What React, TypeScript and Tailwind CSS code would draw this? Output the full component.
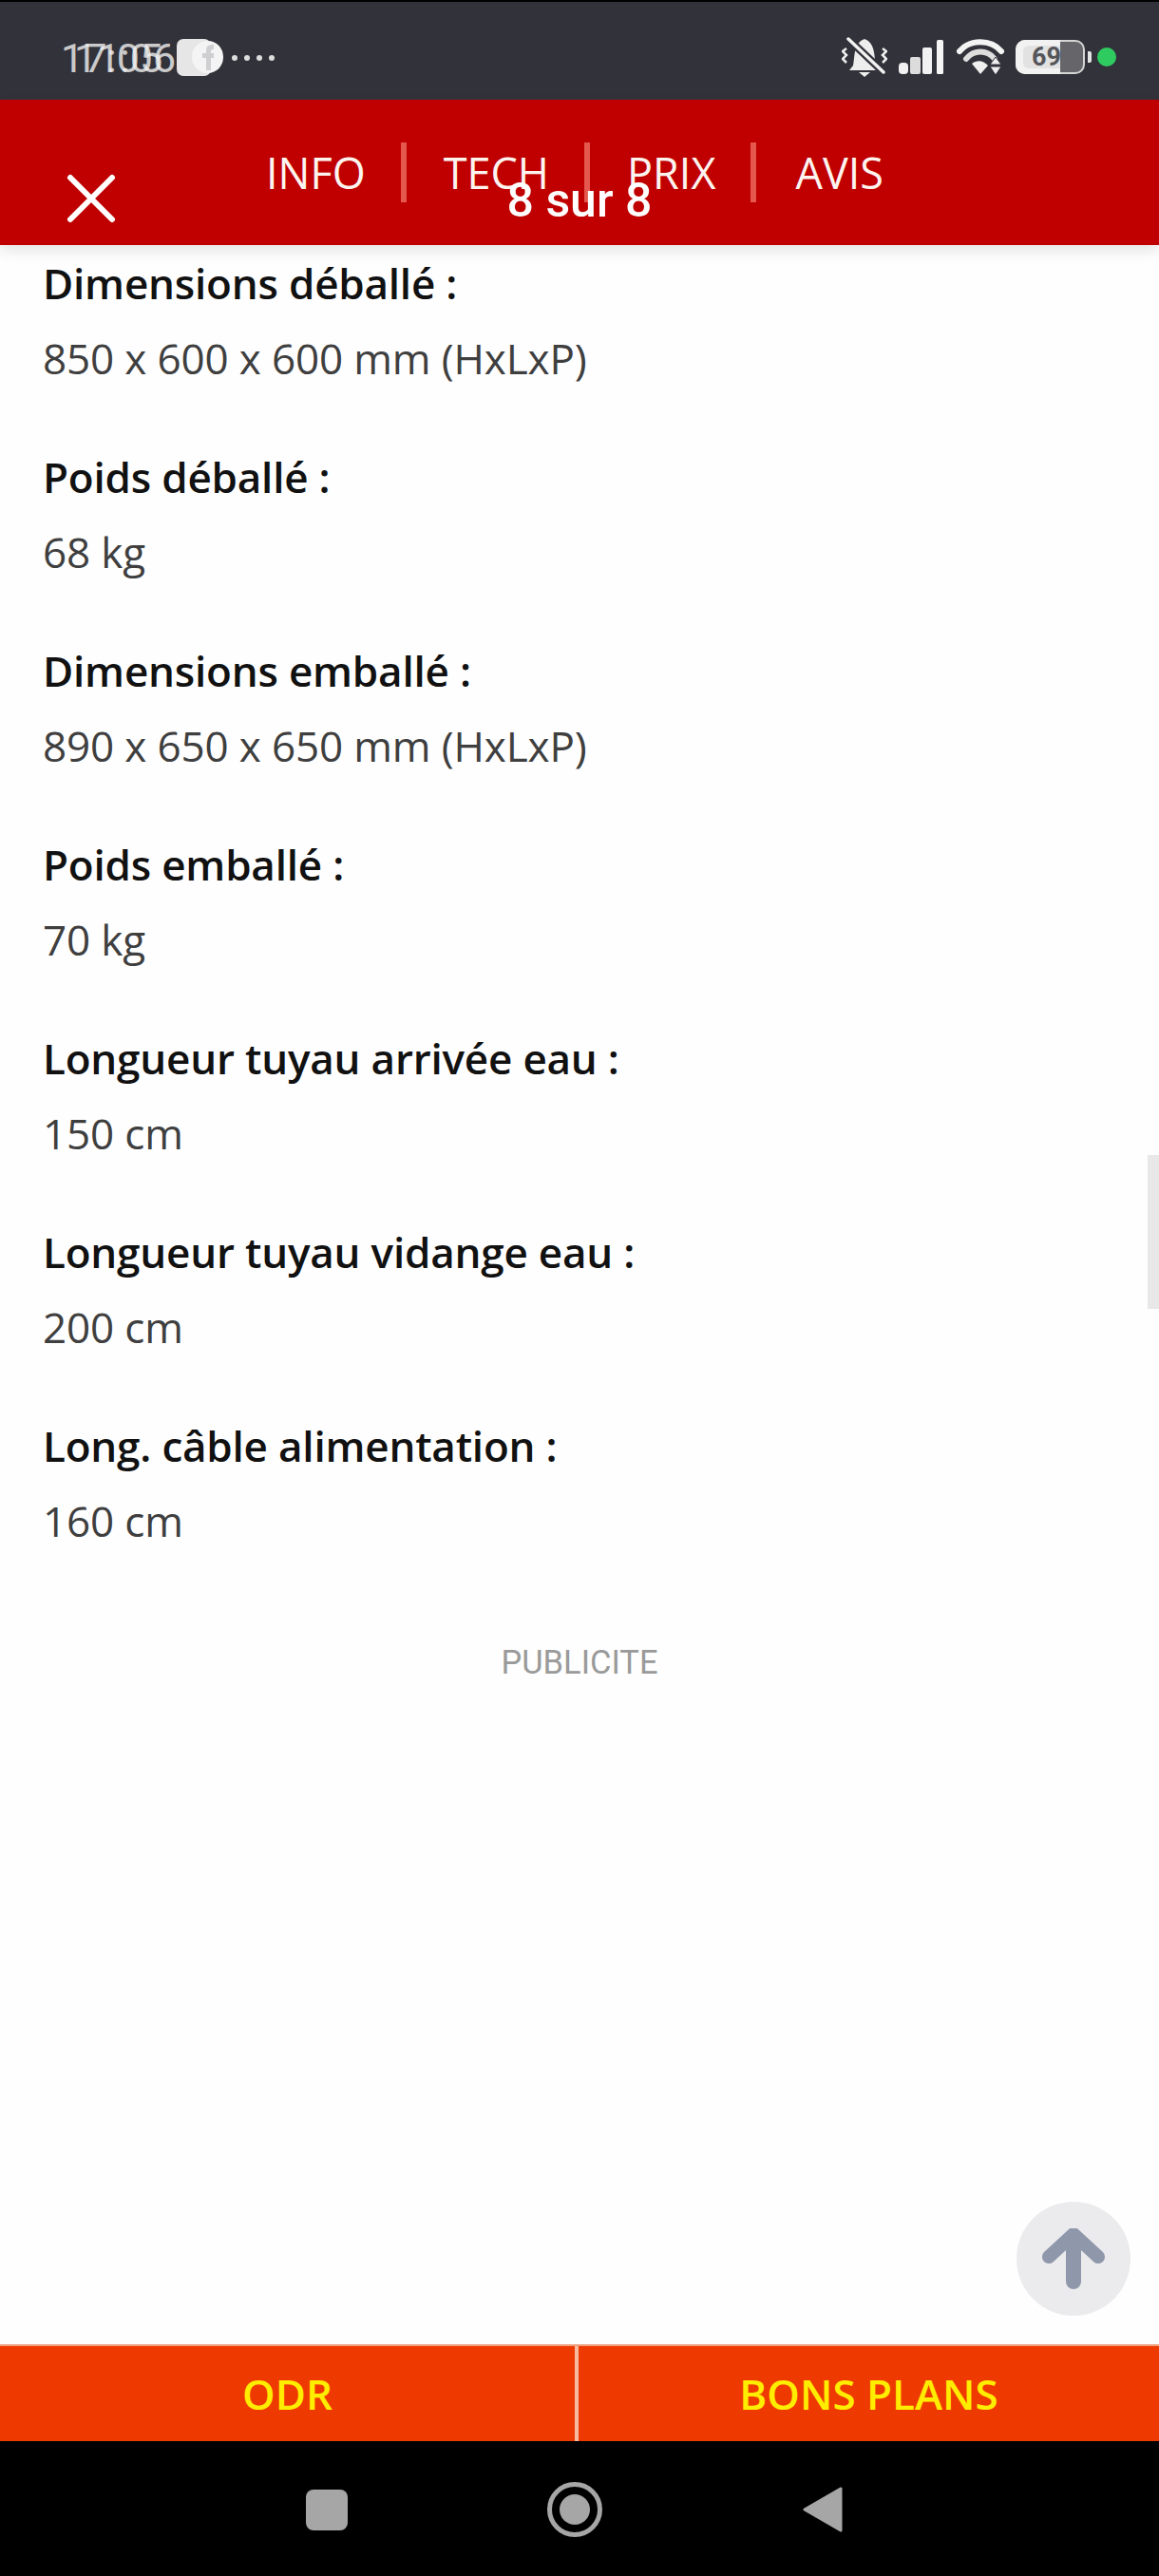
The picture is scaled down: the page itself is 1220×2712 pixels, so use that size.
import React from "react";

const rows = [
  ["Dimensions déballé :", "850 x 600 x 600 mm (HxLxP)"],
  ["Poids déballé :", "68 kg"],
  ["Dimensions emballé :", "890 x 650 x 650 mm (HxLxP)"],
  ["Poids emballé :", "70 kg"],
  ["Longueur tuyau arrivée eau :", "150 cm"],
  ["Longueur tuyau vidange eau :", "200 cm"],
  ["Long. câble alimentation :", "160 cm"],
];

function StatusIcons() {
  return (
    <div className="flex items-center">
      <svg width="48" height="42" viewBox="0 0 48 42" className="mr-[12px]">
        <path d="M12 30 C14 22 12 6 24 2 C36 6 34 22 36 30 L40 35 H8 Z" fill="#eeeeee" />
        <path d="M18 37 H30 L24 42 Z" fill="#eeeeee" />
        <path d="M7 2 L44 37" stroke="#32323a" strokeWidth="8" />
        <path d="M7 2 L44 37" stroke="#f2f2f2" strokeWidth="3.5" strokeLinecap="round" />
        <path d="M5 12 L1 15 L5 19 L1 23 L5 27 M43 12 L47 15 L43 19 L47 23 L43 27" stroke="#eeeeee" strokeWidth="2.5" fill="none" />
      </svg>
      <svg width="47" height="36" viewBox="0 0 47 36" className="mr-[14px]">
        <rect x="0" y="24" width="10" height="12" rx="4" fill="#f2f2f2" />
        <rect x="12" y="18" width="11" height="18" rx="2" fill="#dcdcdc" />
        <rect x="25" y="8" width="10" height="28" rx="2" fill="#f2f2f2" />
        <rect x="40" y="0" width="7" height="36" rx="1.5" fill="#f5f5f5" />
      </svg>
      <svg width="50" height="38" viewBox="0 0 50 38" className="mr-[12px]">
        <path d="M3 13 C14 0 36 0 47 13" stroke="#f4f4f4" strokeWidth="6" fill="none" strokeLinecap="round" />
        <path d="M10 21 C18 11 32 11 40 21" stroke="#dedede" strokeWidth="6" fill="none" strokeLinecap="round" />
        <path d="M16 26 L25 37 L33 28 C28 22 21 22 16 26 Z" fill="#f0f0f0" />
        <path d="M41 19 L35 27 H47 Z M35 29 H47 L41 38 Z" fill="#eeeeee" stroke="#32323a" strokeWidth="1" />
      </svg>
      <div className="relative mr-[3px] h-[36px] w-[73px] rounded-[10px] border-2 border-[#d4d4d4] bg-[#66666a]">
        <div className="absolute -left-[2px] -top-[2px] h-[36px] w-[47px] rounded-l-[10px] bg-[#f2f2f2]" />
        <div className="absolute left-[6px] top-[4px] h-[24px] w-[39px] rounded-l-[6px] bg-[#e2e2e2]" />
        <span className="absolute left-[15px] top-[2px] font-['Roboto',sans-serif] text-[27px] font-bold leading-[28px] text-[#55555a]">
          69
        </span>
      </div>
      <div className="mr-[6px] h-[12px] w-[4px] rounded-r-[2px] bg-[#e4e4e4]" />
      <div className="mr-[45px] h-[20px] w-[20px] rounded-full bg-[#2ecc60]" />
    </div>
  );
}

export default function App() {
  return (
    <div className="relative flex h-[2712px] w-[1220px] flex-col overflow-hidden bg-[#fefefe] font-['Open_Sans',sans-serif]">
      <header className="flex h-[105px] shrink-0 items-center justify-between border-t-2 border-black bg-[#32323a]">
        <div className="flex items-center pl-[64px] pt-[14px]">
          <div className="relative h-[44px] w-[116px] font-['Roboto',sans-serif] text-[43px] leading-[44px] text-[#f0f0f0]">
            <span className="absolute left-0 top-0 opacity-80">17:05</span>
            <span className="absolute left-[14px] top-0 opacity-80">11:06</span>
          </div>
          <div className="relative ml-[6px] h-[39px] w-[36px] rounded-[7px] bg-[#e6e6e6]">
            <div className="absolute left-[16px] top-[2px] flex h-[34px] w-[33px] items-center justify-center rounded-full bg-[#f4f4f4]">
              <svg width="14" height="28" viewBox="0 0 14 28">
                <path d="M5 28 V15 H1 V10 H5 V7 C5 3 7 1 13 1 V6 C10 6 10 7 10 10 H13 V15 H10 V28 Z" fill="#cfcfd2" />
              </svg>
            </div>
          </div>
          <div className="ml-[22px] flex items-center gap-[7px]">
            <div className="h-[6px] w-[6px] rounded-full bg-[#dddddd]" />
            <div className="h-[6px] w-[6px] rounded-full bg-[#dddddd]" />
            <div className="h-[6px] w-[6px] rounded-full bg-[#dddddd]" />
            <div className="h-[6px] w-[6px] rounded-full bg-[#dddddd]" />
          </div>
        </div>
        <div className="pt-[12px]">
          <StatusIcons />
        </div>
      </header>

      <nav className="relative z-10 flex h-[153px] shrink-0 items-center bg-[#c00000] pl-[280px] text-[45px] font-medium text-[#fdf4f0] shadow-[0_6px_14px_rgba(0,0,0,0.1)]">
        <span>INFO</span>
        <div className="ml-[37px] mr-[39px] h-[63px] w-[6px] bg-[#e4584e]" />
        <span>TECH</span>
        <div className="ml-[37px] mr-[39px] h-[63px] w-[6px] bg-[#e4584e]" />
        <span>PRIX</span>
        <div className="ml-[37px] mr-[41px] h-[63px] w-[6px] bg-[#e4584e]" />
        <span>AVIS</span>
        <svg width="52" height="52" viewBox="0 0 52 52" className="absolute left-[70px] top-[78px]">
          <path d="M4 4 L48 48 M48 4 L4 48" stroke="#ffffff" strokeWidth="6" strokeLinecap="round" />
        </svg>
        <div className="absolute left-0 right-0 top-[77px] text-center font-['Roboto',sans-serif] text-[50px] font-medium leading-[58px] text-white">
          8 sur 8
        </div>
      </nav>

      <main className="relative flex-1 px-[45px] pt-[1px]">
        {rows.map(([title, value]) => (
          <div key={title} className="mb-[46px]">
            <div className="text-[44px] font-semibold leading-[79px] tracking-[-0.2px] text-[#111111]">{title}</div>
            <div className="text-[44px] leading-[79px] tracking-[-0.15px] text-[#3f3f3f]">{value}</div>
          </div>
        ))}
        <div className="mt-[87px] text-center font-['Roboto',sans-serif] text-[34.5px] font-normal leading-[44px] text-[#9a9a9a]">
          PUBLICITE
        </div>
        <div className="absolute right-0 top-[958px] h-[162px] w-[12px] bg-[#e8e8e8]" />
        <div className="absolute left-[1070px] top-[2060px] flex h-[120px] w-[120px] items-center justify-center rounded-full bg-[#ebebed]">
          <svg width="66" height="64" viewBox="0 0 66 64">
            <path d="M33 8 V56" stroke="#8f97ab" strokeWidth="16" strokeLinecap="round" />
            <path d="M7 30 L33 6 L59 30" stroke="#8f97ab" strokeWidth="14" fill="none" strokeLinecap="round" strokeLinejoin="miter" />
          </svg>
        </div>
      </main>

      <footer className="flex h-[102px] shrink-0 border-t-2 border-[#f0a080] bg-[#ee3a00] text-[44px] font-semibold text-[#ffed00]">
        <div className="flex w-[605px] items-center justify-center">ODR</div>
        <div className="w-[4px] bg-[#f7b9a0]" />
        <div className="flex flex-1 items-center justify-center">BONS PLANS</div>
      </footer>

      <div className="flex h-[142px] shrink-0 items-center justify-center bg-black pr-[12px] pt-[2px]">
        <div className="h-[43px] w-[44px] rounded-[8px] bg-[#a6a6a6]" />
        <div className="ml-[210px] flex h-[58px] w-[58px] items-center justify-center rounded-full border-[5px] border-[#a6a6a6]">
          <div className="h-[32px] w-[32px] rounded-full bg-[#a6a6a6]" />
        </div>
        <svg width="42" height="48" viewBox="0 0 42 48" className="ml-[211px]">
          <path d="M40 2 V46 L2 24 Z" fill="#a6a6a6" stroke="#a6a6a6" strokeWidth="3" strokeLinejoin="round" />
        </svg>
      </div>
    </div>
  );
}
